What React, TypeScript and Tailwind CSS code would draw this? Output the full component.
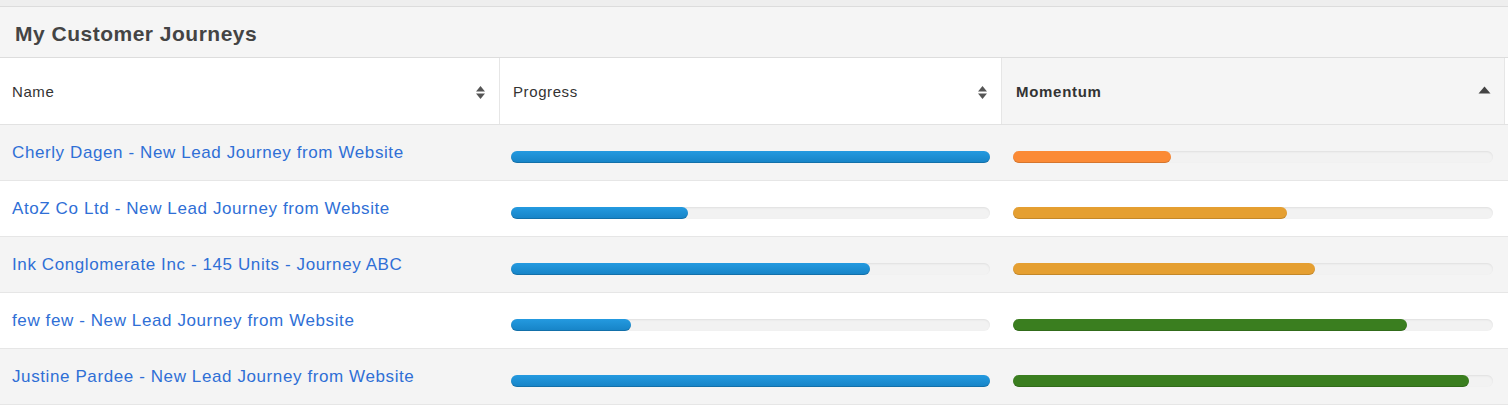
const rows = [
  { name: 'Cherly Dagen - New Lead Journey from Website', progress: 100, momentum: 33, color: 'bg-[#fb8a35]' },
  { name: 'AtoZ Co Ltd - New Lead Journey from Website', progress: 37, momentum: 57, color: 'bg-[#e59f31]' },
  { name: 'Ink Conglomerate Inc - 145 Units - Journey ABC', progress: 75, momentum: 63, color: 'bg-[#e59f31]' },
  { name: 'few few - New Lead Journey from Website', progress: 25, momentum: 82, color: 'bg-[#3a7e1f]' },
  { name: 'Justine Pardee - New Lead Journey from Website', progress: 100, momentum: 95, color: 'bg-[#3a7e1f]' },
];

function SortBoth() {
  return (
    <svg width="11" height="15" viewBox="0 0 11 15" className="text-[#555]">
      <path d="M5.5 1 L10 6.5 H1 Z" fill="currentColor" />
      <path d="M5.5 14 L10 8.5 H1 Z" fill="currentColor" />
    </svg>
  );
}

function SortUp() {
  return (
    <svg width="13" height="8" viewBox="0 0 13 8" className="text-[#444]">
      <path d="M6.5 0.5 L12.5 7.5 H0.5 Z" fill="currentColor" />
    </svg>
  );
}

function Bar({ value, fill }: { value: number; fill: string }) {
  return (
    <div className="h-3 w-full rounded-full bg-[#f2f2f2] shadow-[inset_0_1px_2px_rgba(0,0,0,0.08)]">
      <div
        className={`h-3 rounded-full ${fill} shadow-[inset_0_-1px_0_rgba(0,0,0,0.15)]`}
        style={{ width: `${value}%` }}
      />
    </div>
  );
}

export default function App() {
  return (
    <div className="w-[1508px] h-[408px] bg-white font-['Liberation_Sans',Arial,sans-serif] overflow-hidden">
      <div className="h-[7px] bg-[#eeeeee] border-b border-[#dcdcdc]" />
      <div className="h-[51px] bg-[#f5f5f5] border-b border-[#dddddd] flex items-center px-[15px]">
        <h2 className="text-[21px] font-bold tracking-[0.5px] text-[#444] leading-none pt-[2px]">My Customer Journeys</h2>
      </div>
      <div className="grid grid-cols-[500px_502px_503px_1fr] h-[67px] border-b border-[#e2e2e2] text-[15px] tracking-[0.6px] text-[#333]">
        <div className="flex items-center justify-between pl-3 pr-[13px] pt-[2px] border-r border-[#e6e6e6]">
          <span>Name</span>
          <SortBoth />
        </div>
        <div className="flex items-center justify-between pl-[13px] pr-[13px] pt-[2px] border-r border-[#e6e6e6]">
          <span>Progress</span>
          <SortBoth />
        </div>
        <div className="flex items-center justify-between pl-[14px] pr-[13px] pt-[2px] bg-[#f5f5f5] border-r border-[#e6e6e6]">
          <span className="font-bold tracking-[0.7px] text-[#333]">Momentum</span>
          <span className="pb-[5px]">
            <SortUp />
          </span>
        </div>
        <div />
      </div>
      {rows.map((row, i) => (
        <div
          key={row.name}
          className={`grid grid-cols-[500px_502px_503px_1fr] h-[56px] border-b border-[#e6e6e6] ${i % 2 === 0 ? 'bg-[#f4f4f4]' : 'bg-white'}`}
        >
          <div className="pl-3 pt-[16px]">
            <a className="text-[17px] tracking-[0.6px] leading-5 text-[#2f6fd6]">{row.name}</a>
          </div>
          <div className="pl-[11px] pr-[12px] pt-[26px]">
            <Bar value={row.progress} fill="bg-gradient-to-b from-[#249ae0] to-[#1683c6]" />
          </div>
          <div className="pl-[11px] pr-[12px] pt-[26px]">
            <Bar value={row.momentum} fill={row.color} />
          </div>
          <div />
        </div>
      ))}
    </div>
  );
}
